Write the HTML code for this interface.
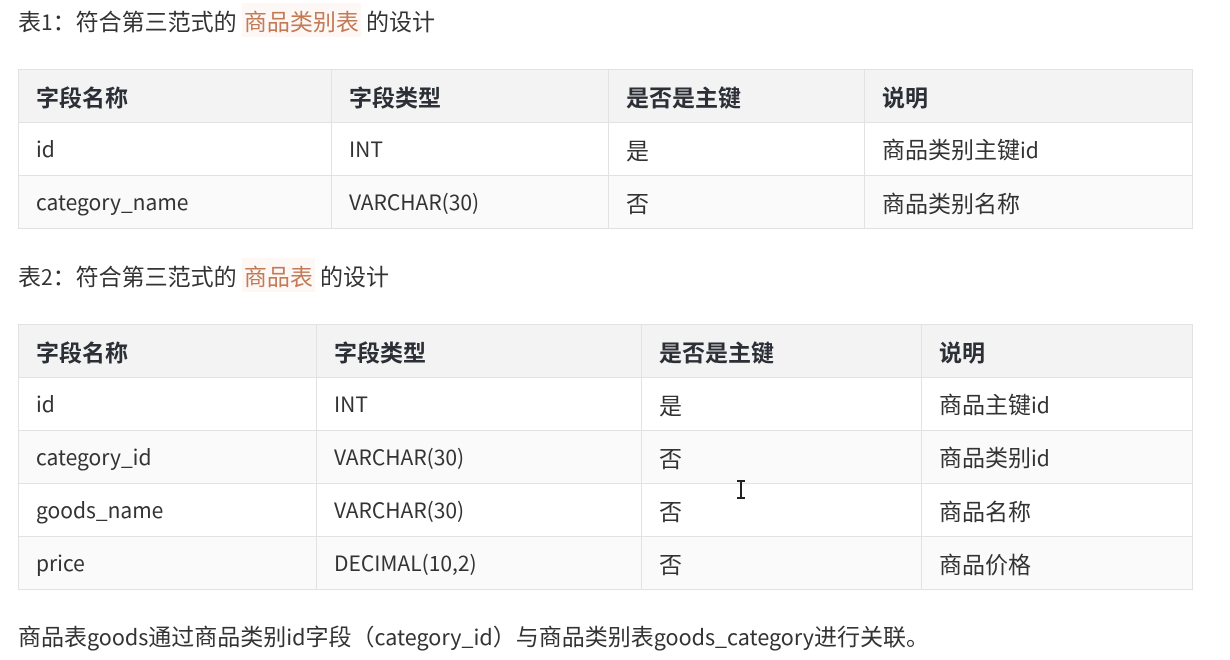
<!DOCTYPE html>
<html><head><meta charset="utf-8"><style>
body{margin:0;width:1230px;height:660px;background:#fff;overflow:hidden;font-family:"Noto Sans CJK SC","Liberation Sans",sans-serif;color:#333;font-size:23px;position:relative}
.t{position:absolute;left:18px;white-space:nowrap;line-height:28px}
.l{font-size:21px}
.b{font-size:21.5px}
.hl{color:#c27a57;background:#fdf8f5;padding:0 2px}
table{position:absolute;left:18px;width:1175px;border-collapse:collapse;table-layout:fixed}
td,th{border:1px solid #e2e2e2;height:52px;padding:0 0 0 17px;text-align:left;font-size:23px;color:#333;line-height:28px}
th{background:#f3f3f4;font-weight:bold;color:#2c2f36}
tr.g td{background:#fafafa}
</style></head><body>
<div class="t" style="top:6px">表<span class="l">1</span>：符合第三范式的 <span class="hl">商品类别表</span> 的设计</div>
<table style="top:69px">
<colgroup><col style="width:313px"><col style="width:277px"><col style="width:256px"><col></colgroup>
<tr><th>字段名称</th><th>字段类型</th><th>是否是主键</th><th>说明</th></tr>
<tr><td class="l">id</td><td class="l">INT</td><td>是</td><td>商品类别主键<span class="l">id</span></td></tr>
<tr class="g"><td class="l">category_name</td><td class="l">VARCHAR(30)</td><td>否</td><td>商品类别名称</td></tr>
</table>
<div class="t" style="top:261px">表<span class="l">2</span>：符合第三范式的 <span class="hl">商品表</span> 的设计</div>
<table style="top:324px">
<colgroup><col style="width:298px"><col style="width:325px"><col style="width:280px"><col></colgroup>
<tr><th>字段名称</th><th>字段类型</th><th>是否是主键</th><th>说明</th></tr>
<tr><td class="l">id</td><td class="l">INT</td><td>是</td><td>商品主键<span class="l">id</span></td></tr>
<tr class="g"><td class="l">category_id</td><td class="l">VARCHAR(30)</td><td>否</td><td>商品类别<span class="l">id</span></td></tr>
<tr><td class="l">goods_name</td><td class="l">VARCHAR(30)</td><td>否</td><td>商品名称</td></tr>
<tr class="g"><td class="l">price</td><td class="l">DECIMAL(10,2)</td><td>否</td><td>商品价格</td></tr>
</table>
<div style="position:absolute;left:740px;top:481px;width:2px;height:17px;background:#222"></div>
<div style="position:absolute;left:737px;top:480px;width:8px;height:1.5px;background:#222"></div>
<div style="position:absolute;left:737px;top:497px;width:8px;height:1.5px;background:#222"></div>
<div class="t" style="top:621px">商品表<span class="b">goods</span>通过商品类别<span class="b">id</span>字段（<span class="b">category_id</span>）与商品类别表<span class="b">goods_category</span>进行关联。</div>
</body></html>
